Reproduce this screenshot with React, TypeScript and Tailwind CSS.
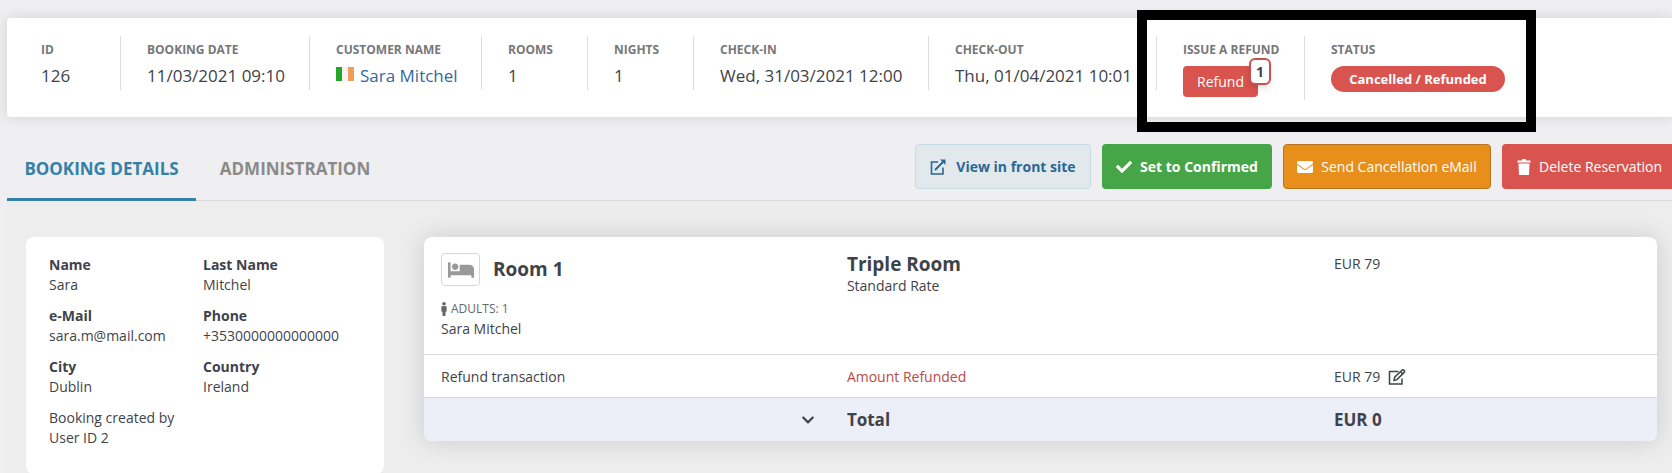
import React from 'react';
import { FaBed, FaCheck, FaChevronDown, FaEnvelope, FaMale } from 'react-icons/fa';

const GUEST_FIELDS = [
  { label: 'Name', value: 'Sara' },
  { label: 'Last Name', value: 'Mitchel' },
  { label: 'e-Mail', value: 'sara.m@mail.com' },
  { label: 'Phone', value: '+3530000000000000' },
  { label: 'City', value: 'Dublin' },
  { label: 'Country', value: 'Ireland' },
];

const ExternalLinkIcon: React.FC = () => (
  <svg viewBox="0 0 16 16" className="h-4 w-4" fill="none" stroke="currentColor" strokeWidth="1.6" aria-hidden="true">
    <path d="M8 3H1.500v12H13V8.500" />
    <path d="M5 11L13 3" strokeWidth="2" />
    <path d="M10 0.500H15.500V6Z" fill="currentColor" stroke="none" />
  </svg>
);

const TrashIcon: React.FC = () => (
  <svg viewBox="0 0 14 16" className="h-4 w-3.5" fill="currentColor" aria-hidden="true">
    <path d="M0.500 1.500H4.500L5.500 0h3l1 1.500h4v2h-13z" />
    <path d="M1.500 4.500h11L12 16H2z" />
  </svg>
);

const EditIcon: React.FC = () => (
  <svg viewBox="0 0 18 16" className="h-4 w-[18px]" fill="none" stroke="currentColor" strokeWidth="1.5" aria-hidden="true">
    <path d="M10.500 2.500H1.500v12.500H14V9.500" />
    <path d="M6 11.500l.8-3.500L14 1.200q1-.8 2 .2t.2 2L9 10.600z" />
    <path d="M12.500 2.800l2.200 2.200" />
  </svg>
);

const IrelandFlag: React.FC = () => (
  <svg viewBox="0 0 18 14" className="mb-1 h-3.5 w-[18px]" aria-hidden="true">
    <path fill="#27a52b" d="M0 0h6v14H0z" />
    <path fill="#f4f4f4" d="M6 0h6v14H6z" />
    <path fill="#ee9e59" d="M12 0h6v14h-6z" />
  </svg>
);

interface SummaryItemProps {
  label: string;
  className: string;
  children: React.ReactNode;
}

const SummaryItem: React.FC<SummaryItemProps> = ({ label, className, children }) => (
  <div className={`shrink-0 whitespace-nowrap ${className}`}>
    <p className="pt-1 text-xs leading-5 font-bold text-[#777777] uppercase">{label}</p>
    <div className="text-[17px] leading-8">{children}</div>
  </div>
);

const BookingSummary: React.FC = () => (
  <section className="flex items-start rounded-l-sm bg-white px-2 pt-[18px] pb-[17px] shadow-[0_0_14px_rgba(0,0,0,0.12)]">
    <SummaryItem label="ID" className="h-[54px] w-[106px] border-r border-[#dddddd] pl-[26px]">126</SummaryItem>
    <SummaryItem label="Booking date" className="h-[54px] w-[189px] border-r border-[#dddddd] pl-[26px]">11/03/2021 09:10</SummaryItem>
    <SummaryItem label="Customer name" className="h-[54px] w-[172px] border-r border-[#dddddd] pl-[26px]">
      <span className="flex items-center gap-1.5">
        <IrelandFlag />
        <a href="#customer" className="text-[#33699a]">Sara Mitchel</a>
      </span>
    </SummaryItem>
    <SummaryItem label="Rooms" className="h-[54px] w-[106px] border-r border-[#dddddd] pl-[26px]">1</SummaryItem>
    <SummaryItem label="Nights" className="h-[54px] w-[106px] border-r border-[#dddddd] pl-[26px]">1</SummaryItem>
    <SummaryItem label="Check-in" className="h-[54px] w-[235px] border-r border-[#dddddd] pl-[26px]">Wed, 31/03/2021 12:00</SummaryItem>
    <SummaryItem label="Check-out" className="h-[54px] w-[228px] border-r border-[#dddddd] pl-[26px]">Thu, 01/04/2021 10:01</SummaryItem>
    <div className="relative flex shrink-0">
      <SummaryItem label="Issue a refund" className="h-16 w-[148px] border-r border-[#dddddd] pl-[26px]">
        <button type="button" className="relative mt-1.5 block h-[31px] w-[75px] rounded-sm bg-[#d9534f] text-sm text-white">
          Refund
          <span className="absolute -top-2 -right-[13px] flex h-[27px] w-[22px] items-center justify-center rounded-md border-2 border-[#c8504d] bg-white text-sm font-bold text-[#3f4251] shadow-md">
            1
          </span>
        </button>
      </SummaryItem>
      <SummaryItem label="Status" className="w-[221px] pl-[26px]">
        <span className="mt-1.5 flex h-[26px] w-[174px] items-center justify-center rounded-full bg-[#d9534f] text-[13px] font-bold text-white">
          Cancelled / Refunded
        </span>
      </SummaryItem>
      <div className="pointer-events-none absolute -top-[26px] -right-[10px] -bottom-8 -left-5 border-[10px] border-black" />
    </div>
  </section>
);

const Toolbar: React.FC = () => (
  <div className="mt-[27px] flex items-start justify-between border-b border-[#d9d9d9]">
    <div role="tablist" className="-mb-px flex h-[57px] text-[17px] font-bold">
      <button type="button" role="tab" aria-selected="true" className="w-[189px] border-b-3 border-[#3580a7] pb-1 text-[#3580a7] uppercase">
        Booking details
      </button>
      <button type="button" role="tab" aria-selected="false" className="w-[198px] border-b-3 border-transparent pb-1 text-[#8a8a8a] uppercase">
        Administration
      </button>
    </div>
    <div className="flex h-[45px] gap-[11px] text-sm whitespace-nowrap text-white">
      <a href="#front" className="flex w-44 items-center justify-center gap-2.5 rounded-sm border border-[#c5dce5] bg-[#e1e9ed] font-bold text-[#2b6793]">
        <ExternalLinkIcon />
        View in front site
      </a>
      <button type="button" className="flex w-[170px] items-center justify-center gap-2 rounded-sm bg-[#46a546] font-bold">
        <FaCheck className="h-4 w-4" />
        Set to Confirmed
      </button>
      <button type="button" className="flex w-[208px] items-center justify-center gap-2 rounded-sm border border-[#b57420] bg-[#e88e1a]">
        <FaEnvelope className="h-4 w-4" />
        Send Cancellation eMail
      </button>
      <button type="button" className="flex w-[170px] items-center gap-2 rounded-l-sm bg-[#d9534f] pl-[15px]">
        <TrashIcon />
        Delete Reservation
      </button>
    </div>
  </div>
);

const GuestCard: React.FC = () => (
  <aside className="w-[358px] shrink-0 rounded-lg bg-white px-[23px] pt-[18px] pb-[26px] leading-5">
    <dl className="grid grid-cols-[154px_1fr] gap-y-[11px]">
      {GUEST_FIELDS.map(field => (
        <div key={field.label}>
          <dt className="font-bold">{field.label}</dt>
          <dd>{field.value}</dd>
        </div>
      ))}
    </dl>
    <p className="mt-[11px] w-[140px]">Booking created by User ID 2</p>
  </aside>
);

const RoomTable: React.FC = () => (
  <div className="flex-1 overflow-hidden rounded-lg bg-white shadow-[0_0_26px_rgba(0,0,0,0.14)]">
    <table className="w-full table-fixed text-left">
      <colgroup>
        <col className="w-[33%]" />
        <col className="w-[39.5%]" />
        <col />
      </colgroup>
      <tbody>
        <tr className="h-[117px] align-top">
          <td className="px-[17px] pt-4">
            <div className="flex items-center gap-[13px]">
              <span className="flex h-[33px] w-[39px] items-center justify-center rounded-sm border border-[#d6d6d6] text-[#999999]">
                <FaBed className="h-[26px] w-[26px]" />
              </span>
              <h3 className="text-[19px] font-bold">Room 1</h3>
            </div>
            <p className="mt-[13px] flex items-center text-xs leading-5 text-[#666666]">
              <FaMale className="-ml-1 h-3.5 w-3.5" />
              ADULTS: 1
            </p>
            <p className="leading-5">Sara Mitchel</p>
          </td>
          <td className="px-4 pt-4">
            <h3 className="text-[19px] leading-[23px] font-bold">Triple Room</h3>
            <p className="leading-5">Standard Rate</p>
          </td>
          <td className="px-4 pt-[17px] leading-5">EUR 79</td>
        </tr>
        <tr className="h-[43px] border-t border-[#d9d9db]">
          <td className="px-[17px] pt-0.5 font-medium">Refund transaction</td>
          <td className="px-4 pt-0.5 text-[#b94a48]">Amount Refunded</td>
          <td className="px-4 pt-0.5">
            <span className="flex items-center gap-2">
              EUR 79
              <button type="button" aria-label="Edit refund">
                <EditIcon />
              </button>
            </span>
          </td>
        </tr>
        <tr className="h-11 border-t border-[#d9d9db] bg-[#eceff8] text-[17px] font-bold">
          <td className="px-4 pt-0.5">
            <button type="button" aria-label="Show details" className="ml-auto block">
              <FaChevronDown className="h-3.5 w-3.5" />
            </button>
          </td>
          <td className="px-4 pt-0.5">Total</td>
          <td className="px-4 pt-0.5">EUR 0</td>
        </tr>
      </tbody>
    </table>
  </div>
);

export default function App() {
  return (
    <main className="min-h-screen overflow-hidden bg-[#efeff1] pt-[18px] pl-[7px] font-['Open_Sans',sans-serif] text-sm text-[#3f4349]">
      <BookingSummary />
      <Toolbar />
      <div className="flex items-start gap-10 bg-[#ededed] pt-9 pr-[15px] pl-[19px]">
        <GuestCard />
        <RoomTable />
      </div>
    </main>
  );
}
